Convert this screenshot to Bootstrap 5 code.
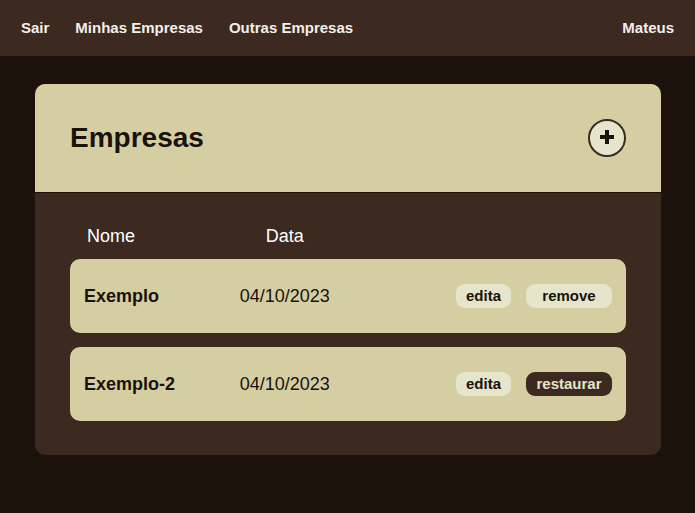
<!DOCTYPE html>
<html lang="pt-BR">
<head>
<meta charset="utf-8">
<meta name="viewport" content="width=device-width, initial-scale=1">
<title>Empresas</title>
<link href="https://cdn.jsdelivr.net/npm/bootstrap@5.3.0/dist/css/bootstrap.min.css" rel="stylesheet">
<style>
  :root { --ink: #1a120b; --brown: #3c2a21; --sand: #d5cea3; --cream: #e5e5cb; }
  body { background: var(--ink); color: var(--ink); font-family: "Liberation Sans", Arial, sans-serif; font-size: 18px; line-height: 18px; }
  .topbar { background: var(--brown); min-height: 56px; padding: 0 21px; font-size: 15px; }
  .topbar-list { gap: 26px; }
  .topbar .nav-link { color: #f2efe8; padding: 0; }
  .page { padding: 28px 34px 28px 35px; }
  .panel { background: var(--brown); border: 0; border-radius: 10px; overflow: hidden; }
  .panel-top { background: var(--sand); padding: 35px; border-bottom: 1px solid var(--ink); }
  .panel-title { font-size: 28px; line-height: 32px; }
  .panel-content { padding: 20px 35px; }
  .btn-add { width: 38px; height: 38px; background: var(--cream); border: 2px solid var(--brown); color: var(--ink); }
  .companies { border-collapse: separate; border-spacing: 0 14px; }
  .companies th, .companies td { padding: 0 14px; }
  .companies thead th { color: #fff; padding: 0 17px; }
  .companies tbody tr { height: 74px; }
  .companies tbody th, .companies tbody td { background: var(--sand); }
  .companies tbody th { border-radius: 10px 0 0 10px; }
  .companies tbody td:last-child { border-radius: 0 10px 10px 0; }
  .col-name { width: 28%; }
  .col-date { width: 21%; }
  .actions { gap: 15px; }
  .btn-row { background: var(--cream); color: var(--ink); border: 0; border-radius: 9px; padding: 3px 10px; font-size: 15px; line-height: 18px; }
  .btn-wide { min-width: 86px; }
  .btn-restore { background: var(--brown); color: var(--cream); }
</style>
</head>
<body>
<nav class="topbar d-flex align-items-center justify-content-between fw-bold" aria-label="Principal">
  <ul class="topbar-list list-unstyled d-flex mb-0">
    <li><a class="nav-link" href="#">Sair</a></li>
    <li><a class="nav-link" href="#">Minhas Empresas</a></li>
    <li><a class="nav-link" href="#">Outras Empresas</a></li>
  </ul>
  <a class="nav-link" href="#">Mateus</a>
</nav>
<main class="page">
  <section class="panel card">
    <header class="panel-top d-flex align-items-center justify-content-between">
      <h1 class="panel-title fw-bold mb-0">Empresas</h1>
      <button type="button" class="btn-add rounded-circle d-flex align-items-center justify-content-center p-0" aria-label="Adicionar empresa">
        <svg width="16" height="16" viewBox="0 0 16 16" aria-hidden="true"><path d="M6 0h4v5h5v4h-5v5H6V9H1V5h5z" fill="currentColor"/></svg>
      </button>
    </header>
    <div class="panel-content">
      <table class="companies w-100">
        <thead>
          <tr>
            <th class="col-name fw-normal" scope="col">Nome</th>
            <th class="col-date fw-normal text-center" scope="col">Data</th>
            <td></td>
          </tr>
        </thead>
        <tbody>
          <tr>
            <th class="fw-bold" scope="row">Exemplo</th>
            <td class="text-center">04/10/2023</td>
            <td>
              <div class="actions d-flex justify-content-end">
                <button type="button" class="btn-row fw-bold">edita</button>
                <button type="button" class="btn-row btn-wide fw-bold">remove</button>
              </div>
            </td>
          </tr>
          <tr>
            <th class="fw-bold" scope="row">Exemplo-2</th>
            <td class="text-center">04/10/2023</td>
            <td>
              <div class="actions d-flex justify-content-end">
                <button type="button" class="btn-row fw-bold">edita</button>
                <button type="button" class="btn-row btn-wide btn-restore fw-bold">restaurar</button>
              </div>
            </td>
          </tr>
        </tbody>
      </table>
    </div>
  </section>
</main>
<script src="https://cdn.jsdelivr.net/npm/bootstrap@5.3.0/dist/js/bootstrap.bundle.min.js"></script>
</body>
</html>
